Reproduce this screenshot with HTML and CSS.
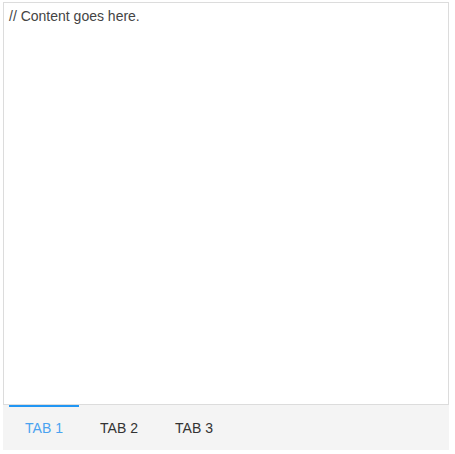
FILE: index.html
```html
<!DOCTYPE html>
<html>
<head>
<meta charset="utf-8">
<link rel="stylesheet" href="styles.css">
</head>
<body>
<div class="tabview">
  <div class="content">// Content goes here.</div>
  <div class="tabbar">
    <div class="tab active">TAB 1</div>
    <div class="tab">TAB 2</div>
    <div class="tab">TAB 3</div>
  </div>
</div>
</body>
</html>
```
FILE: styles.css
```css
html, body {
  margin: 0;
  padding: 0;
  background: #fff;
}
body {
  padding: 2px 0 0 3px;
  font-family: "Liberation Sans", Arial, sans-serif;
}
.tabview {
  width: 446px;
  display: flex;
  flex-direction: column;
}
.content {
  height: 401px;
  border: 1px solid #dcdcdc;
  background: #fff;
  box-sizing: content-box;
  padding: 5px 5px;
  box-sizing: border-box;
  height: 403px;
  font-size: 14px;
  line-height: 16px;
  color: #444;
}
.tabbar {
  height: 45px;
  background: #f4f4f4;
  display: flex;
  gap: 5px;
  padding-left: 6px;
}
.tab {
  width: 70px;
  text-align: center;
  font-size: 14px;
  color: #333;
  padding-top: 13px;
  box-sizing: border-box;
  border-top: 2px solid transparent;
}
.tab.active {
  color: #4aa3f0;
  border-top-color: #2196f3;
}
```
